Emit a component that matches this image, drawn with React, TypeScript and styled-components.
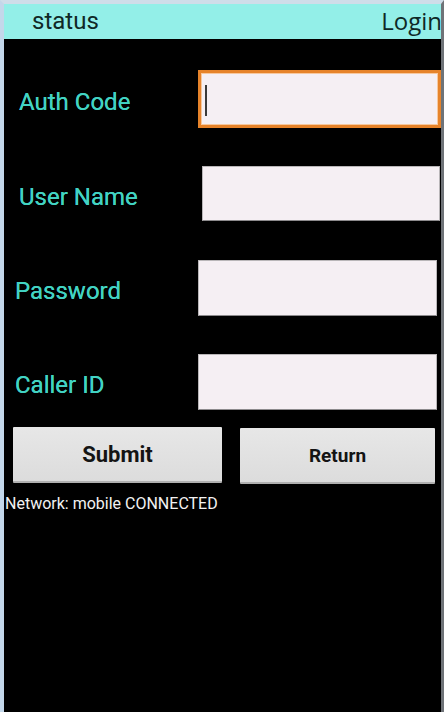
import React from "react";
import styled, { createGlobalStyle } from "styled-components";

const Global = createGlobalStyle`
  html, body { margin: 0; padding: 0; background: #000; }
  body { font-family: Roboto, "Noto Sans", sans-serif; }
  * { box-sizing: border-box; }
`;

const Frame = styled.div`
  width: 444px;
  height: 712px;
  display: flex;
  flex-direction: column;
  background: #000;
  border-left: 4px solid #c3d7ea;
  border-top: 4px solid #cfdde9;
  border-right: 3px solid #6f7378;
`;

const Header = styled.div`
  height: 35px;
  flex: none;
  display: flex;
  align-items: center;
  justify-content: space-between;
  background: #93efe8;
  padding: 0 0 0 28px;
  color: #0f2826;
`;

const Title = styled.span`
  font-family: Roboto, sans-serif;
  font-size: 24px;
  line-height: 1;
  margin-top: -1px;
`;

const Action = styled.span`
  font-family: "Open Sans", sans-serif;
  font-size: 24px;
  line-height: 1;
  margin-top: -2px;
  margin-right: -1px;
`;

const Body = styled.div`
  flex: 1;
  display: flex;
  flex-direction: column;
`;

const Row = styled.div<{ $top: number; $labelLeft: number; $right: number; $h: number }>`
  display: flex;
  align-items: center;
  height: ${(p) => p.$h}px;
  margin-top: ${(p) => p.$top}px;
  padding-left: ${(p) => p.$labelLeft}px;
  padding-right: ${(p) => p.$right}px;
`;

const Label = styled.label`
  flex: 1;
  color: #42d3c3;
  font-family: Roboto, sans-serif;
  font-size: 24px;
  line-height: 1;
  padding-top: 6px;
  text-shadow: 0 0 0.4px #42d3c3;
`;

const Field = styled.div<{ $w: number; $focused?: boolean }>`
  width: ${(p) => p.$w}px;
  height: 100%;
  position: relative;
  background: #f5eff3;
  border: ${(p) => (p.$focused ? "3px solid #e6832a" : "1px solid #b9b6b8")};
  border-bottom-color: ${(p) => (p.$focused ? "#e6832a" : "#8c8a8c")};
  box-shadow: ${(p) => (p.$focused ? "inset 0 0 0 1px #f7c89e" : "none")};
`;

const Caret = styled.span`
  position: absolute;
  left: 4px;
  top: 12px;
  bottom: 9px;
  width: 2px;
  background: #3a3a3a;
`;

const Buttons = styled.div`
  display: flex;
  margin-top: 17px;
  padding: 0 6px 0 9px;
  gap: 18px;
  align-items: flex-start;
`;

const Button = styled.button<{ $w: number; $size: number; $offset?: number }>`
  width: ${(p) => p.$w}px;
  height: 56px;
  margin-top: ${(p) => p.$offset ?? 0}px;
  border: none;
  border-bottom: 2px solid #b0b0b0;
  border-radius: 1px;
  background: linear-gradient(#e7e7e7, #dcdcdc);
  color: #141414;
  font-family: Roboto, sans-serif;
  font-weight: 700;
  font-size: ${(p) => p.$size}px;
  padding: 0;
`;

const Status = styled.div`
  margin-top: 10px;
  padding-left: 1px;
  color: #f2f2f2;
  font-family: Roboto, sans-serif;
  font-size: 16px;
  line-height: 19px;
`;

export default function App() {
  return (
    <>
      <Global />
      <Frame>
        <Header>
          <Title>status</Title>
          <Action>Login</Action>
        </Header>
        <Body>
          <Row $top={31} $h={58} $labelLeft={15} $right={0}>
            <Label>Auth Code</Label>
            <Field $w={243} $focused>
              <Caret />
            </Field>
          </Row>
          <Row $top={38} $h={55} $labelLeft={15} $right={1}>
            <Label>User Name</Label>
            <Field $w={238} />
          </Row>
          <Row $top={39} $h={56} $labelLeft={11} $right={4}>
            <Label>Password</Label>
            <Field $w={239} />
          </Row>
          <Row $top={38} $h={56} $labelLeft={11} $right={4}>
            <Label>Caller ID</Label>
            <Field $w={239} />
          </Row>
          <Buttons>
            <Button $w={209} $size={22}>Submit</Button>
            <Button $w={195} $size={19} $offset={1}>Return</Button>
          </Buttons>
          <Status>Network: mobile CONNECTED</Status>
        </Body>
      </Frame>
    </>
  );
}
